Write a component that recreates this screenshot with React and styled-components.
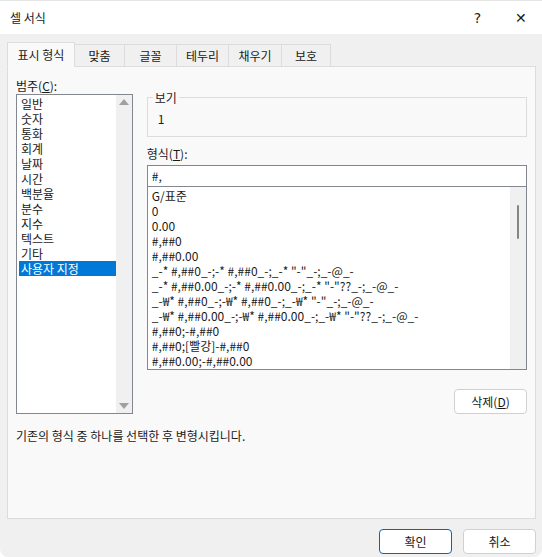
import React from "react";
import styled, { createGlobalStyle } from "styled-components";

const Global = createGlobalStyle`
  html, body { margin: 0; padding: 0; background: #fff; }
  body { font-family: "Noto Sans CJK KR", "Noto Sans", sans-serif; font-size: 12px; color: #1a1a1a; }
`;

const Dialog = styled.div`
  width: 542px;
  height: 557px;
  background: #f0f0f0;
  border-radius: 0 0 8px 8px;
  display: flex;
  flex-direction: column;
  overflow: hidden;
`;

const TitleBar = styled.div`
  height: 33px;
  background: #fff;
  display: flex;
  align-items: center;
  padding: 0 0 0 10px;
  font-size: 12px;
  border-top: 1px solid #e4e4e4;
`;

const Title = styled.div`
  flex: 1;
`;

const TitleBtn = styled.div`
  width: 43px;
  text-align: center;
  font-size: 14px;
  font-family: "DejaVu Sans", sans-serif;
  font-weight: ${(p) => (p.bold ? 300 : 400)};
`;

const Body = styled.div`
  flex: 1;
  padding: 8px 7px 0 7px;
  display: flex;
  flex-direction: column;
`;

const Tabs = styled.div`
  display: flex;
  align-items: flex-end;
  height: 24px;
  position: relative;
  z-index: 1;
`;

const Tab = styled.div`
  height: ${(p) => (p.active ? 25 : 22)}px;
  width: ${(p) => p.w}px;
  box-sizing: border-box;
  border: 1px solid #dcdcdc;
  border-bottom: ${(p) => (p.active ? "1px solid #f9f9f9" : "none")};
  background: ${(p) => (p.active ? "#f9f9f9" : "#f0f0f0")};
  display: flex;
  align-items: center;
  justify-content: center;
  margin-right: -1px;
  margin-bottom: ${(p) => (p.active ? -1 : 0)}px;
`;

const Panel = styled.div`
  height: 453px;
  box-sizing: border-box;
  width: 529px;
  background: #f9f9f9;
  border: 1px solid #dcdcdc;
  padding: 10px 8px 0 8px;
  display: flex;
  flex-direction: column;
`;

const Columns = styled.div`
  display: flex;
  gap: 14px;
`;

const LeftCol = styled.div`
  width: 117px;
  display: flex;
  flex-direction: column;
`;

const RightCol = styled.div`
  width: 381px;
  display: flex;
  flex-direction: column;
  padding-top: 12px;
`;

const Label = styled.div`
  height: 17px;
  line-height: 17px;
  margin-top: ${(p) => p.mt || 0}px;
`;

const ListBox = styled.div`
  height: ${(p) => p.h}px;
  box-sizing: border-box;
  border: 1px solid #828790;
  ${(p) => (p.joined ? "border-top: none;" : "")}
  background: #fff;
  display: flex;
`;

const Items = styled.div`
  flex: 1;
  padding: ${(p) => p.pad || "1px 1px"};
  overflow: hidden;
`;

const Item = styled.div`
  height: 15px;
  line-height: 15px;
  padding-left: 2px;
  white-space: nowrap;
  background: ${(p) => (p.sel ? "#0078d7" : "transparent")};
  color: ${(p) => (p.sel ? "#fff" : "#1a1a1a")};
`;

const ScrollBar = styled.div`
  width: 16px;
  background: #f0f0f0;
  display: flex;
  flex-direction: column;
  align-items: center;
  justify-content: space-between;
  padding: 4px 0;
  position: relative;
`;

const Arrow = styled.div`
  width: 0;
  height: 0;
  border-left: 5px solid transparent;
  border-right: 5px solid transparent;
  ${(p) => (p.up ? "border-bottom: 6px solid #a0a0a0;" : "border-top: 6px solid #a0a0a0;")}
`;

const Thumb = styled.div`
  position: absolute;
  top: 18px;
  left: 7px;
  width: 2px;
  height: 34px;
  background: #858585;
  border-radius: 1px;
`;

const Group = styled.fieldset`
  margin: 0;
  height: 48px;
  box-sizing: border-box;
  border: 1px solid #dcdcdc;
  padding: 0 10px;
  legend {
    padding: 0 2px;
    margin-left: -5px;
  }
`;

const Sample = styled.div`
  padding-top: 4px;
`;

const Input = styled.div`
  margin-top: 3px;
  height: 22px;
  box-sizing: border-box;
  border: 1px solid #828790;
  background: #fff;
  padding: 0 4px;
  line-height: 20px;
`;

const Button = styled.div`
  width: ${(p) => p.w || 73}px;
  height: 25px;
  box-sizing: border-box;
  border: 1px solid ${(p) => (p.primary ? "#0067c0" : "#d0d0d0")};
  border-radius: 4px;
  background: #fff;
  display: flex;
  align-items: center;
  justify-content: center;
`;

const Right = styled.div`
  display: flex;
  justify-content: flex-end;
  margin-top: ${(p) => p.mt}px;
  margin-right: ${(p) => p.mr || 0}px;
  gap: 11px;
`;

const Hint = styled.div`
  margin-top: 13px;
`;

const U = styled.span`
  text-decoration: underline;
`;

const cats = ["일반", "숫자", "통화", "회계", "날짜", "시간", "백분율", "분수", "지수", "텍스트", "기타", "사용자 지정"];
const formats = [
  "G/표준",
  "0",
  "0.00",
  "#,##0",
  "#,##0.00",
  '_-* #,##0_-;-* #,##0_-;_-* "-"_-;_-@_-',
  '_-* #,##0.00_-;-* #,##0.00_-;_-* "-"??_-;_-@_-',
  '_-₩* #,##0_-;-₩* #,##0_-;_-₩* "-"_-;_-@_-',
  '_-₩* #,##0.00_-;-₩* #,##0.00_-;_-₩* "-"??_-;_-@_-',
  "#,##0;-#,##0",
  "#,##0;[빨강]-#,##0",
  "#,##0.00;-#,##0.00",
];

export default function App() {
  return (
    <>
      <Global />
      <Dialog>
        <TitleBar>
          <Title>셀 서식</Title>
          <TitleBtn>?</TitleBtn>
          <TitleBtn bold>✕</TitleBtn>
        </TitleBar>
        <Body>
          <Tabs>
            <Tab active w={68}>표시 형식</Tab>
            <Tab w={51}>맞춤</Tab>
            <Tab w={53}>글꼴</Tab>
            <Tab w={53}>테두리</Tab>
            <Tab w={54}>채우기</Tab>
            <Tab w={50}>보호</Tab>
          </Tabs>
          <Panel>
            <Columns>
              <LeftCol>
                <Label>범주(<U>C</U>):</Label>
                <ListBox h={320}>
                  <Items pad="1px 0 0 2px">
                    {cats.map((c, i) => (
                      <Item key={c} sel={i === cats.length - 1}>{c}</Item>
                    ))}
                  </Items>
                  <ScrollBar>
                    <Arrow up />
                    <Arrow />
                  </ScrollBar>
                </ListBox>
              </LeftCol>
              <RightCol>
                <Group>
                  <legend>보기</legend>
                  <Sample>1</Sample>
                </Group>
                <Label mt={8}>형식(<U>T</U>):</Label>
                <Input>#,</Input>
                <ListBox h={183} joined>
                  <Items pad="1px 2px">
                    {formats.map((f) => (
                      <Item key={f}>{f}</Item>
                    ))}
                  </Items>
                  <ScrollBar>
                    <Thumb />
                  </ScrollBar>
                </ListBox>
                <Right mt={19}>
                  <Button>삭제(<U>D</U>)</Button>
                </Right>
              </RightCol>
            </Columns>
            <Hint>기존의 형식 중 하나를 선택한 후 변형시킵니다.</Hint>
          </Panel>
          <Right mt={10} mr={-1}>
            <Button primary>확인</Button>
            <Button>취소</Button>
          </Right>
        </Body>
      </Dialog>
    </>
  );
}
